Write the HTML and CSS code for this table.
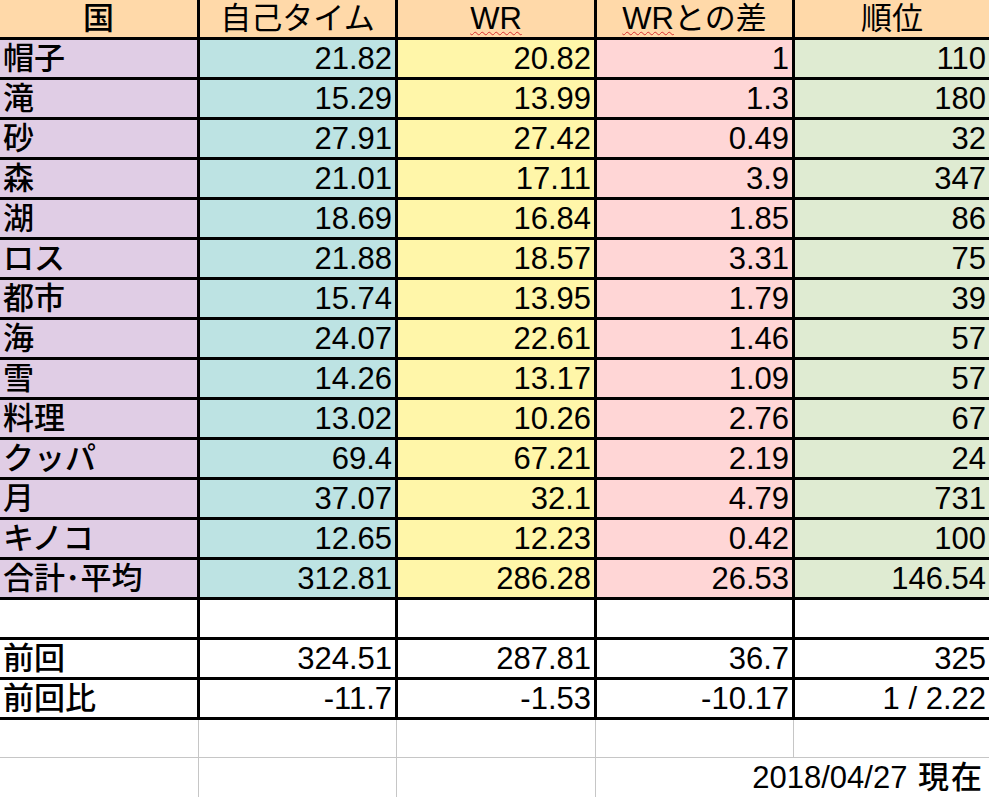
FILE: index.html
```html
<!DOCTYPE html>
<html lang="ja">
<head>
<meta charset="utf-8">
<title>タイム表</title>
<link rel="stylesheet" href="styles.css">
</head>
<body>
<div class="sheet">
  <div class="grid">
    <div class="cell h strong">国</div>
    <div class="cell h">自己タイム</div>
    <div class="cell h"><span class="sp">WR</span></div>
    <div class="cell h"><span class="sp">WR</span>との差</div>
    <div class="cell h">順位</div>

    <div class="cell l c1">帽子</div><div class="cell n c2">21.82</div><div class="cell n c3">20.82</div><div class="cell n c4">1</div><div class="cell n c5">110</div>
    <div class="cell l c1">滝</div><div class="cell n c2">15.29</div><div class="cell n c3">13.99</div><div class="cell n c4">1.3</div><div class="cell n c5">180</div>
    <div class="cell l c1">砂</div><div class="cell n c2">27.91</div><div class="cell n c3">27.42</div><div class="cell n c4">0.49</div><div class="cell n c5">32</div>
    <div class="cell l c1">森</div><div class="cell n c2">21.01</div><div class="cell n c3">17.11</div><div class="cell n c4">3.9</div><div class="cell n c5">347</div>
    <div class="cell l c1">湖</div><div class="cell n c2">18.69</div><div class="cell n c3">16.84</div><div class="cell n c4">1.85</div><div class="cell n c5">86</div>
    <div class="cell l c1">ロス</div><div class="cell n c2">21.88</div><div class="cell n c3">18.57</div><div class="cell n c4">3.31</div><div class="cell n c5">75</div>
    <div class="cell l c1">都市</div><div class="cell n c2">15.74</div><div class="cell n c3">13.95</div><div class="cell n c4">1.79</div><div class="cell n c5">39</div>
    <div class="cell l c1">海</div><div class="cell n c2">24.07</div><div class="cell n c3">22.61</div><div class="cell n c4">1.46</div><div class="cell n c5">57</div>
    <div class="cell l c1">雪</div><div class="cell n c2">14.26</div><div class="cell n c3">13.17</div><div class="cell n c4">1.09</div><div class="cell n c5">57</div>
    <div class="cell l c1">料理</div><div class="cell n c2">13.02</div><div class="cell n c3">10.26</div><div class="cell n c4">2.76</div><div class="cell n c5">67</div>
    <div class="cell l c1">クッパ</div><div class="cell n c2">69.4</div><div class="cell n c3">67.21</div><div class="cell n c4">2.19</div><div class="cell n c5">24</div>
    <div class="cell l c1">月</div><div class="cell n c2">37.07</div><div class="cell n c3">32.1</div><div class="cell n c4">4.79</div><div class="cell n c5">731</div>
    <div class="cell l c1">キノコ</div><div class="cell n c2">12.65</div><div class="cell n c3">12.23</div><div class="cell n c4">0.42</div><div class="cell n c5">100</div>
    <div class="cell l c1">合計･平均</div><div class="cell n c2">312.81</div><div class="cell n c3">286.28</div><div class="cell n c4">26.53</div><div class="cell n c5">146.54</div>

    <div class="cell w"></div><div class="cell w"></div><div class="cell w"></div><div class="cell w"></div><div class="cell w"></div>
    <div class="cell l w">前回</div><div class="cell n w">324.51</div><div class="cell n w">287.81</div><div class="cell n w">36.7</div><div class="cell n w">325</div>
    <div class="cell l w">前回比</div><div class="cell n w">-11.7</div><div class="cell n w">-1.53</div><div class="cell n w">-10.17</div><div class="cell n w">1 / 2.22</div>
  </div>
  <div class="foot">
    <div class="fcell"></div><div class="fcell"></div><div class="fcell"></div><div class="fcell"></div><div class="fcell"></div>
    <div class="fcell"></div><div class="fcell"></div><div class="fcell"></div><div class="fcell date">2018/04/27 <span class="jp">現在</span></div>
  </div>
</div>
</body>
</html>
```
FILE: styles.css
```css
html, body {
  margin: 0;
  padding: 0;
  overflow: hidden;
  background: #ffffff;
}

body {
  font-family: "Liberation Sans", "Noto Sans CJK JP", sans-serif;
  font-size: 31px;
  font-weight: 400;
  color: #000000;
}

.sheet {
  width: 989px;
}

.grid {
  display: grid;
  grid-template-columns: 197px 195px 196px 195px 194px;
  grid-auto-rows: 37px;
  column-gap: 3px;
  row-gap: 3px;
  padding-bottom: 3px;
  background: #000000;
}

.cell {
  line-height: 37px;
  white-space: nowrap;
  overflow: hidden;
}

.h {
  background: #ffd9a9;
  text-align: center;
}

.strong {
  font-weight: 500;
}

.l {
  padding-left: 3px;
  font-weight: 500;
}

.n {
  text-align: right;
  padding-right: 3px;
}

.c1 { background: #e0cde5; }
.c2 { background: #bde3e3; }
.c3 { background: #fff6a9; }
.c4 { background: #ffd6d6; }
.c5 { background: #dfebd2; }
.w  { background: #ffffff; }

.sp {
  text-decoration: underline wavy #d83030;
  text-decoration-thickness: 1px;
  text-underline-offset: 2px;
  text-decoration-skip-ink: none;
}

.foot {
  display: grid;
  grid-template-columns: 198px 197px 198px 197px 1fr;
  grid-template-rows: 37px 40px;
  gap: 1px;
  background: #c6c6c6;
}

.fcell {
  background: #ffffff;
  line-height: 40px;
  white-space: nowrap;
}

.date {
  grid-column: 4 / span 2;
  text-align: right;
  padding-right: 5px;
}

.jp {
  letter-spacing: 2px;
  padding-left: 2px;
  font-weight: 500;
}
```
